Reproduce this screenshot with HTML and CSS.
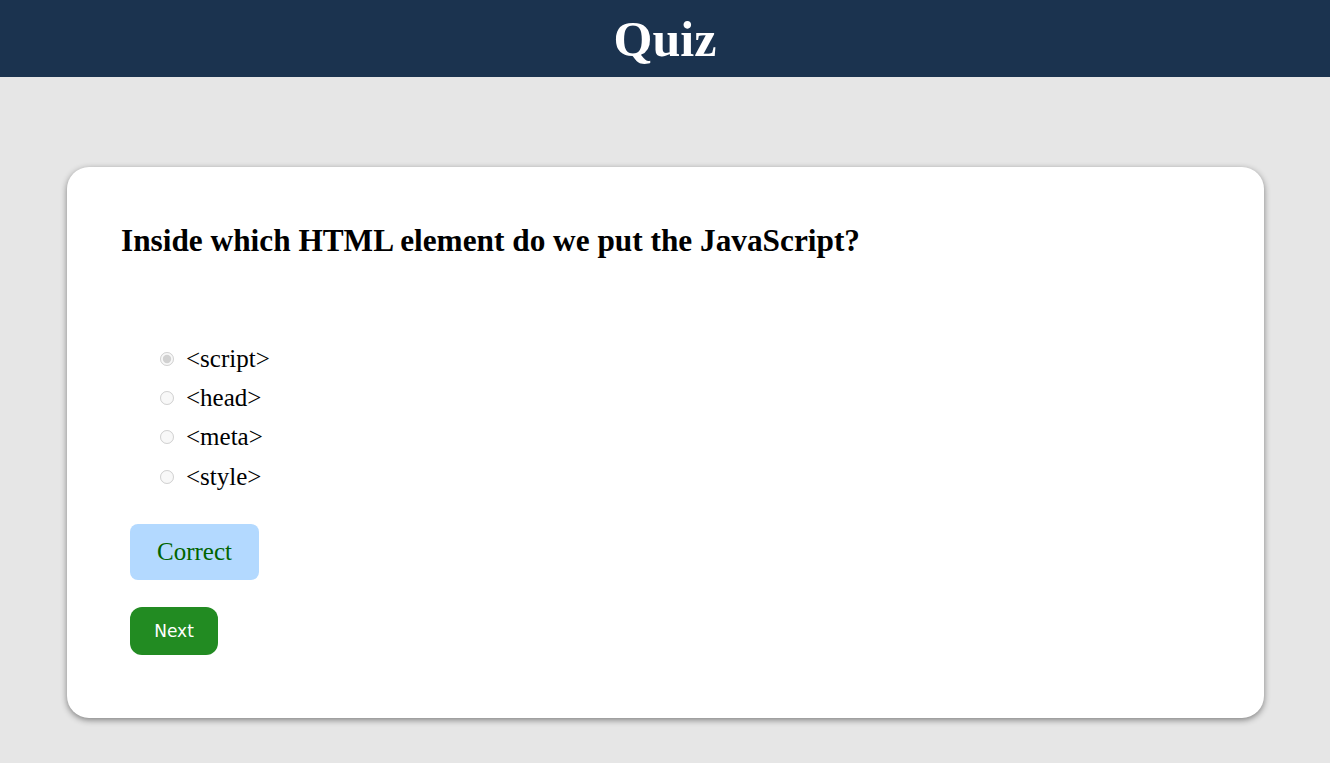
FILE: index.html
```html
<!DOCTYPE html>
<html>
<head>
<meta charset="utf-8">
<title>Quiz</title>
<link rel="stylesheet" href="styles.css">
</head>
<body>
<header class="topbar"><h1 class="title">Quiz</h1></header>
<main class="page">
  <section class="card">
    <h2 class="question">Inside which HTML element do we put the JavaScript?</h2>
    <ul class="options">
      <li class="option"><input type="radio" name="a" checked disabled><label>&lt;script&gt;</label></li>
      <li class="option"><input type="radio" name="a" disabled><label>&lt;head&gt;</label></li>
      <li class="option"><input type="radio" name="a" disabled><label>&lt;meta&gt;</label></li>
      <li class="option"><input type="radio" name="a" disabled><label>&lt;style&gt;</label></li>
    </ul>
    <div class="result">Correct</div>
    <button class="next">Next</button>
  </section>
</main>
</body>
</html>
```
FILE: styles.css
```css
html, body { margin: 0; padding: 0; }
body {
  background: #e6e6e6;
  font-family: "Liberation Serif", "Times New Roman", serif;
  color: #000;
}
.topbar {
  background: #1b334f;
  height: 77px;
  display: flex;
  align-items: center;
  justify-content: center;
}
.title {
  margin: 0;
  color: #fff;
  font-size: 50px;
  font-weight: bold;
}
.page {
  padding: 90px 66px 40px 67px;
}
.card {
  background: #fff;
  border-radius: 22px;
  box-shadow: 0 2px 6px rgba(0,0,0,0.45);
  padding: 54px 54px 63px 54px;
  height: 434px;
}
.question {
  margin: 0;
  padding-top: 2px;
  font-size: 31.3px;
  font-weight: bold;
}
.options {
  list-style: none;
  margin: 80px 0 0 0;
  padding: 0 0 0 36px;
}
.option {
  display: flex;
  align-items: center;
  height: 39.4px;
  font-size: 25px;
}
.option input {
  margin: 0 12px 0 3px;
  width: 14px;
  height: 14px;
}
.result {
  display: inline-block;
  margin: 27px 0 0 9px;
  background: #b3d9ff;
  color: #006400;
  font-size: 25px;
  padding: 0 27px;
  height: 56px;
  line-height: 56px;
  border-radius: 8px;
}
.next {
  display: block;
  margin: 27px 0 0 9px;
  background: #228b22;
  color: #fff;
  border: none;
  border-radius: 12px;
  width: 88px;
  height: 48px;
  font-family: "DejaVu Sans", Verdana, sans-serif;
  font-size: 17px;
}
```
